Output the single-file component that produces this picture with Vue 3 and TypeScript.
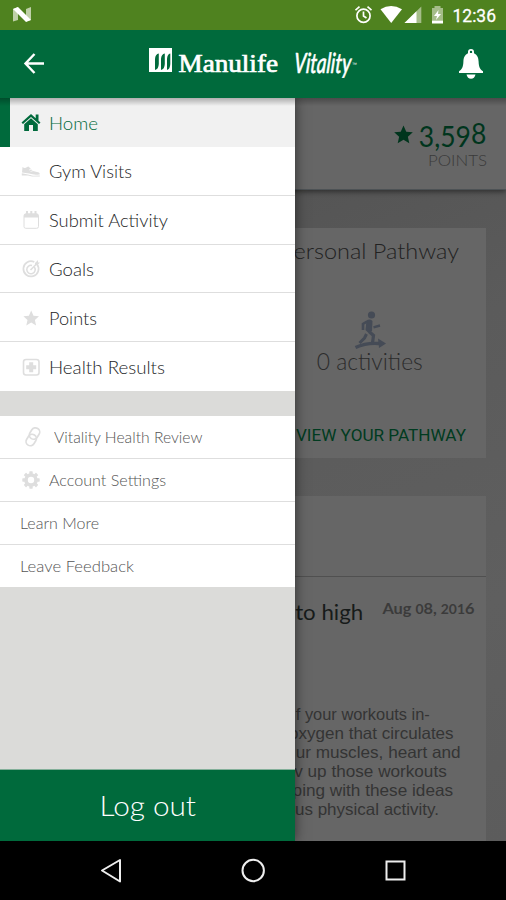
<script setup lang="ts">
interface MenuItem { label: string; icon: string; width: number; active?: boolean }
interface Line { text: string; width: number; inset: number }

const primary: MenuItem[] = [
  { label: 'Home', icon: 'home', width: 49, active: true },
  { label: 'Gym Visits', icon: 'shoe', width: 83 },
  { label: 'Submit Activity', icon: 'calendar', width: 119 },
  { label: 'Goals', icon: 'goal', width: 45 },
  { label: 'Points', icon: 'star', width: 48 },
  { label: 'Health Results', icon: 'health', width: 116 },
]
const secondary: MenuItem[] = [
  { label: 'Vitality Health Review', icon: 'link', width: 148.5 },
  { label: 'Account Settings', icon: 'gear', width: 117 },
  { label: 'Learn More', icon: '', width: 79 },
  { label: 'Leave Feedback', icon: '', width: 114 },
]
const article: Line[] = [
  { text: 'f your workouts in-', width: 134, inset: 56 },
  { text: 'oxygen that circulates', width: 164.5, inset: 32 },
  { text: 'ur muscles, heart and', width: 165, inset: 25 },
  { text: 'v up those workouts', width: 152.5, inset: 39 },
  { text: 'ping with these ideas', width: 160.5, inset: 33 },
  { text: 'us physical activity.', width: 144, inset: 47 },
]

// Stretches a label horizontally so that it fills the given width.
function fit(el: HTMLElement, { value }: { value: number }) {
  el.style.transform = `scaleX(${value / el.getBoundingClientRect().width})`
}
const vFit = { mounted: fit }
</script>

<template>
  <div class="screen">
    <div class="status">
      <svg class="n-logo" width="18" height="16" viewBox="0 0 18 16">
        <path d="M0 2 5 0V13L0 14.5Z M13 2 18 0V13L13 14.5Z" fill="#bfd0a8" />
        <path d="M0 2 5 0 18 13 13 15Z" fill="#fff" />
      </svg>
      <svg width="151" height="30" viewBox="355 0 151 30" fill="none">
        <g stroke="#fff" stroke-width="1.7">
          <circle cx="363.5" cy="15.7" r="6.6" />
          <path d="M363.5 11.5V16l3 2M355.5 10.2l4-3.5M371.5 10.2l-4-3.5" />
        </g>
        <path d="M380.5 9.2Q391 2.6 402 9.2L391.2 23Z" fill="#fff" />
        <path d="M404.5 23 421.3 6.5V23Z" fill="#a5bd89" />
        <path d="M404.5 23 416.5 11.2V23Z" fill="#fff" />
        <path d="M432 8H434.5V6H440.5V8H443V20.5H432Z" fill="#a5bd89" />
        <path d="M432 20.5H443V23.5H432Z M438.5 10 434 16H437L436 20 441 14H438Z" fill="#fff" />
        <text x="452.5" y="22" textLength="43.5" lengthAdjust="spacingAndGlyphs" class="clock">12:36</text>
      </svg>
    </div>

    <header class="header">
      <svg class="back" width="22" height="22" viewBox="0 0 22 22" fill="none" stroke="#fff" stroke-width="2.4">
        <path d="M21 11.500H2.5M11.500 2 2.500 11.500 11.500 21" />
      </svg>
      <svg class="brand" width="215" height="50" viewBox="145 40 215 50">
        <path d="M149 48H172V72H149Z" fill="#fff" />
        <path d="M155 70V59Q155.300 54 158.800 53.500V64Q158.500 69.300 155 70ZM161 70V59Q161.300 54 164.800 53.500V64Q164.500 69.300 161 70ZM167 70V59Q167.300 54 170.300 53.500V64Q170 69.300 167 70Z" fill="#006a3c" />
        <text x="178.500" y="72" textLength="99.500" lengthAdjust="spacingAndGlyphs" class="manulife">Manulife</text>
        <text x="0" y="0" textLength="57" lengthAdjust="spacingAndGlyphs" class="vitality" transform="translate(293.500 73) skewX(-4)">Vitality</text>
        <text x="352" y="66" class="tm">™</text>
      </svg>
      <svg class="bell" width="26" height="32" viewBox="0 0 26 32" fill="#fff">
        <path fill-rule="evenodd" d="M13 1a3 3 0 0 1 3 3v1.300C19.500 7 20.500 10 20.600 13.500 20.800 19 22 21.500 25 23.300V25H1V23.300C4 21.500 5.200 19 5.400 13.500 5.500 10 6.500 7 10 5.300V4a3 3 0 0 1 3-3Zm0 1.700a1.200 1.200 0 1 0 0 2.400 1.200 1.200 0 0 0 0-2.400Z" />
        <path d="M8.500 26.500H17.500Q16.500 30.700 13 30.700 9.500 30.700 8.500 26.500Z" />
      </svg>
    </header>

    <main class="body">
      <div class="page">
        <section class="points">
          <div class="score">
            <svg width="19" height="19" viewBox="0 0 20 20"><path d="M10 .5 12.900 7l6.900.6-5.200 4.700 1.500 7L10 15.600 3.900 19.300l1.500-7L.2 7.600 7.100 7Z" fill="#00351d" /></svg>
            <span v-fit="67.5" class="number"><span class="low">3,59</span>8</span>
          </div>
          <div class="caption"><span v-fit="59">POINTS</span></div>
        </section>
        <section class="card pathway">
          <div class="title"><span v-fit="165.5">ersonal Pathway</span></div>
          <svg class="runner" width="32" height="38" viewBox="0 0 32 38" fill="none" stroke="#454b56">
            <circle cx="17.500" cy="4" r="3.600" fill="#454b56" stroke="none" />
            <path d="M12.500 9.500Q16 7.500 18.500 10L18 20 14 21.500 11.500 19Z" fill="#454b56" stroke="none" />
            <path d="M13 10.500 9 13V19" stroke-width="2.600" />
            <path d="M19.500 16.300 26 14.500" stroke-width="2.400" />
            <path d="M15 20.500 19.500 24.500 18.500 32" stroke-width="3.200" />
            <path d="M12.500 23 10.500 27 5.500 32" stroke-width="3" />
            <path d="M1.500 36.500Q12 31.500 25 32.500" stroke-width="3.400" />
            <path d="M24 27.500 32 32.500 25 37Z" fill="#454b56" stroke="none" />
          </svg>
          <div class="activities"><span v-fit="106">0 activities</span></div>
          <div class="cta"><span v-fit="170">VIEW YOUR PATHWAY</span></div>
        </section>
        <section class="card news">
          <div class="news-head" />
          <div class="news-title">
            <span v-fit="68" class="headline">to high</span>
            <div class="date"><span v-fit="92">Aug <span class="small">0</span>8, <span class="small">201</span>6</span></div>
          </div>
          <div class="copy">
            <div v-for="line in article" :key="line.text" class="line" :style="{ paddingRight: line.inset + 'px' }">
              <span v-fit="line.width">{{ line.text }}</span>
            </div>
          </div>
        </section>
      </div>

      <aside class="drawer">
        <nav class="primary">
          <div v-for="item in primary" :key="item.label" class="item" :class="{ active: item.active }">
            <svg class="icon" width="20" height="20" viewBox="0 0 20 20" fill="currentColor">
              <path v-if="item.icon === 'home'" d="M10 1 .5 9.500 2 11 10 4 18 11 19.500 9.500 17.500 7.700V1.500H14.700V5.200ZM3.200 11.200V18H8V12H12V18H16.800V11.200L10 5.300Z" />
              <g v-else-if="item.icon === 'shoe'">
                <path d="M1.500 6Q4 8 6 6L7.500 5.500 12 10 18 11.500 19 13.200Q14 14.500 8 12.600L1 11.500Z" />
                <path d="M.8 12.300 7 13.600 12 14.700 18.800 14.400V15.500H11L7 14.500H.8Z" />
                <path d="m8 9 3-1m-1.500 2.500 3-1" stroke="#fff" stroke-width=".7" />
              </g>
              <g v-else-if="item.icon === 'calendar'">
                <rect x="3" y="4" width="14.500" height="14.300" rx="1.800" fill="none" stroke="currentColor" />
                <path d="M3 7.500V5.500Q3 3.500 5 3.500V1H7V3.500H9.300V1H11.300V3.500H13.500V1H15.500V3.500Q17.500 3.500 17.500 5.500V7.500Z" />
              </g>
              <g v-else-if="item.icon === 'goal'" fill="none" stroke="currentColor">
                <path d="M16 5.200A7.600 7.600 0 1 1 13.300 3" stroke-width="1.700" />
                <path d="M13.300 8A4.200 4.200 0 1 1 11 6.500" stroke-width="1.500" />
                <path d="M9.500 11 17 3.500" stroke-width="1.600" />
                <path d="M14 4 17 1V3.500H19L16.500 6H14Z" fill="currentColor" stroke="none" />
              </g>
              <path v-else-if="item.icon === 'star'" d="m10.200 2.500 2.300 5.200 5.500.5-4.100 3.700 1.200 5.600-4.900-2.900-4.900 2.900 1.200-5.600-4.100-3.700 5.500-.5Z" />
              <g v-else>
                <rect x="2.500" y="2.500" width="15.500" height="15.500" rx="2.500" fill="none" stroke="currentColor" stroke-width="1.600" />
                <path d="M8.200 5.300H12.200V8.300H15.200V12.300H12.200V15.300H8.200V12.300H5.200V8.300H8.200Z" />
              </g>
            </svg>
            <span v-fit="item.width">{{ item.label }}</span>
          </div>
        </nav>
        <nav class="secondary">
          <div v-for="item in secondary" :key="item.label" class="item" :class="item.icon">
            <svg v-if="item.icon === 'link'" class="icon" width="20" height="22" viewBox="0 0 20 22" fill="none" stroke="currentColor" stroke-width="1.700">
              <rect x="7.300" y="1.500" width="8.500" height="12" rx="4.250" transform="rotate(32 11.500 7.500)" />
              <rect x="4" y="8" width="8.500" height="12" rx="4.250" transform="rotate(32 8.200 14)" />
            </svg>
            <svg v-else-if="item.icon === 'gear'" class="icon" width="20" height="20" viewBox="0 0 20 20">
              <circle cx="10" cy="10" r="5" fill="none" stroke="currentColor" stroke-width="3.600" />
              <g fill="currentColor">
                <rect v-for="n in 8" :key="n" x="8.300" y="1.300" width="3.400" height="3.500" rx=".6" :transform="`rotate(${n * 45} 10 10)`" />
              </g>
            </svg>
            <span v-fit="item.width">{{ item.label }}</span>
          </div>
        </nav>
        <div class="logout"><span v-fit="96.5">Log out</span></div>
      </aside>
    </main>

    <footer class="navbar">
      <svg width="506" height="59" viewBox="0 0 506 59" fill="none" stroke="#eee" stroke-width="2">
        <path d="M102 29.500 120 19V40.500Z" stroke-linejoin="round" />
        <circle cx="253.200" cy="29.500" r="10.700" />
        <rect x="386.500" y="20.500" width="18" height="18" />
      </svg>
    </footer>
  </div>
</template>

<style>
body { background: #000; }
</style>

<style scoped>
.screen { width: 506px; height: 900px; display: flex; flex-direction: column; overflow: hidden; font-family: Lato, "Open Sans", sans-serif; font-weight: 300; white-space: nowrap; }
.status { height: 30px; background: #4f821f; display: flex; justify-content: space-between; flex: none; }
.n-logo { margin: 7px 0 0 13px; }
.clock { font: 400 18px Roboto, sans-serif; fill: #fff; stroke: #fff; stroke-width: .3px; }
.header { height: 68px; flex: none; background: #006a3c; display: flex; align-items: flex-start; }
.back { margin: 22px 0 0 23px; }
.brand { margin: 10px 0 0 100px; overflow: visible; }
.bell { margin: 18px 0 0 98px; }
.manulife { font: 25px "Liberation Serif", serif; fill: #fff; stroke: #fff; stroke-width: .7px; }
.vitality { font: italic 500 28px Lato, sans-serif; fill: #fff; stroke: #fff; stroke-width: .5px; }
.tm { font: 5px "Liberation Sans", sans-serif; fill: #fff; }
.body { height: 743px; flex: none; position: relative; overflow: hidden; }
.body::after { content: ""; position: absolute; inset: 0 0 auto 0; height: 8px; background: linear-gradient(rgba(0, 0, 0, .28), transparent); }
.page { height: 743px; background: linear-gradient(155deg, #525252 10%, #575755 24%, #555 24.200%, #5b5b5b 45%, #5f5f5f 75%, #5c5c5c); display: flex; flex-direction: column; align-items: flex-end; }
.page span { transform-origin: right center; }
.points { box-sizing: border-box; width: 100%; height: 92px; flex: none; background: #666; padding: 19px 19.5px 0 0; border-bottom: 1px solid #4d5255; box-shadow: 0 2px 5px rgba(0, 0, 0, .45); }
.score { height: 32px; display: flex; justify-content: flex-end; align-items: center; gap: 2px; color: #00351d; }
.score svg { position: relative; top: 1px; }
.number { font-size: 28px; line-height: 25px; font-weight: 400; }
.low { position: relative; top: 3px; }
.caption { display: flex; justify-content: flex-end; font-size: 16px; line-height: 21px; color: #3a3a3a; }
.card { box-sizing: border-box; width: 467px; background: #666; margin-right: 20px; flex: none; display: flex; flex-direction: column; }
.pathway { height: 230px; margin-top: 38px; align-items: flex-end; }
.title { display: flex; padding: 9px 27px 0 0; font-size: 22px; line-height: 28px; color: #222; }
.runner { margin: 46px 100px 0 0; }
.activities { display: flex; margin: -2px 63px 0 0; font-size: 23px; line-height: 28px; color: #2c2c2c; }
.cta { display: flex; margin: 49px 20px 0 0; font: 400 17px/22px Roboto, sans-serif; color: #003b20; }
.news { height: 345px; margin-top: 38px; }
.news-head { height: 80px; border-bottom: 1px solid #505050; }
.news-title { display: flex; justify-content: flex-end; align-items: flex-start; padding: 20px 12px 0 0; height: 109px; box-sizing: border-box; }
.headline { font-size: 21px; line-height: 30px; color: #171b1a; font-weight: 400; }
.date { width: 92px; margin-left: 19px; display: flex; justify-content: flex-end; font-size: 15px; line-height: 23px; font-weight: 700; color: #3b3b3b; }
.small { font-size: .85em; }
.copy { padding-top: 19px; font: 16.500px/19px "Liberation Sans", sans-serif; color: #343434; }
.line { display: flex; justify-content: flex-end; }
.drawer { position: absolute; left: 0; top: 0; width: 295px; height: 743px; background: #dbdbd9; display: flex; flex-direction: column; box-shadow: 0 0 12px rgba(0, 0, 0, .55); }
.primary { height: 293px; display: grid; grid-template-rows: 49px repeat(5, 1fr); flex: none; }
.item { box-sizing: border-box; background: #fff; display: flex; align-items: center; border-bottom: 1px solid #dedede; }
.item span { transform-origin: left center; }
.icon { flex: none; color: #dedede; }
.primary .item { padding: 1px 0 0 21px; gap: 8px; font-size: 18px; color: #232527; }
.primary .active { color: #006a3c; background: #f1f1f1; border-left: 10px solid #006a3c; padding: 0 0 0 11px; border-bottom: 0; }
.primary .active .icon { color: #006a3c; }
.primary .item:last-child { border-bottom: 0; }
.secondary { margin-top: 25px; height: 171px; display: grid; grid-template-rows: 43px 43px 43px 42px; flex: none; }
.secondary .item { padding-left: 20px; font-size: 15px; color: #555; }
.secondary .link { padding-left: 23px; gap: 11px; }
.secondary .gear { padding-left: 21px; gap: 8px; }
.secondary .item:last-child { border-bottom: 0; }
.logout { margin-top: auto; height: 71px; border-top: 1px solid #83af99; background: #006a3c; color: #fff; display: flex; align-items: center; justify-content: center; font-size: 27px; }
.navbar { height: 59px; flex: none; background: #000; }
</style>
